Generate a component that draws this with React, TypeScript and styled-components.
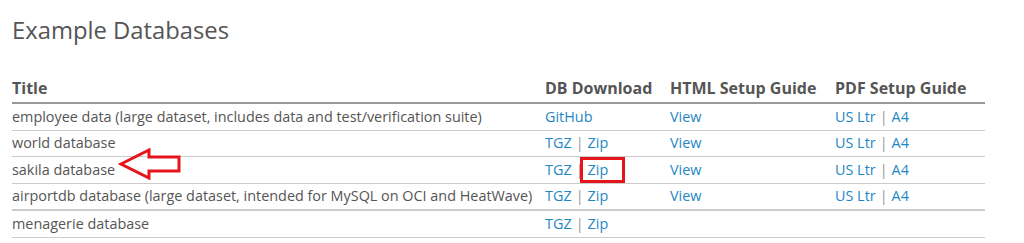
import React from 'react';
import styled, { createGlobalStyle } from 'styled-components';

const GlobalStyle = createGlobalStyle`
  html, body {
    margin: 0;
    padding: 0;
    background: #fff;
    font-family: 'Open Sans', 'Liberation Sans', sans-serif;
    color: #555;
  }
`;

const Page = styled.div`
  width: 1024px;
  height: 243px;
  overflow: hidden;
  padding: 15px 0 0 12px;
  box-sizing: border-box;
`;

const Heading = styled.h2`
  margin: 0 0 31px;
  font-size: 23.8px;
  font-weight: 400;
  line-height: 30px;
  color: #555;
`;

const Table = styled.table`
  width: 973px;
  border-collapse: collapse;
  table-layout: fixed;
`;

const HeadCell = styled.th`
  text-align: left;
  font-size: 16px;
  font-weight: 700;
  color: #555;
  padding: 0 0 3px;
  height: 23px;
  border-bottom: 2px solid #999;
`;

const Row = styled.tr<{ $thick?: boolean }>`
  border-bottom: ${(p) => (p.$thick ? '2px solid #ccc' : '1px solid #ccc')};
`;

const Cell = styled.td`
  font-size: 14.4px;
  line-height: 20px;
  height: 25.5px;
  padding: 0;
  white-space: nowrap;
  color: #555;
  vertical-align: middle;
`;

const TitleWrap = styled.span`
  position: relative;
`;

const Link = styled.a<{ $boxed?: boolean }>`
  color: #1f87c3;
  text-decoration: none;
  position: relative;

  ${(p) =>
    p.$boxed &&
    `
    &::after {
      content: '';
      position: absolute;
      left: -8px;
      right: -17px;
      top: -3px;
      bottom: -4px;
      border: 3px solid #e8141c;
    }
  `}
`;

const Sep = styled.span`
  color: #999;
  margin: 0 4px;
`;

const Arrow = styled.svg`
  position: absolute;
  left: calc(100% + 3px);
  top: -12px;
`;

type Links = { label: string; boxed?: boolean }[];

const rows: { title: string; dl: Links; html: boolean; pdf: boolean; thick?: boolean; arrow?: boolean }[] = [
  {
    title: 'employee data (large dataset, includes data and test/verification suite)',
    dl: [{ label: 'GitHub' }],
    html: true,
    pdf: true,
  },
  { title: 'world database', dl: [{ label: 'TGZ' }, { label: 'Zip' }], html: true, pdf: true },
  {
    title: 'sakila database',
    dl: [{ label: 'TGZ' }, { label: 'Zip', boxed: true }],
    html: true,
    pdf: true,
    arrow: true,
  },
  {
    title: 'airportdb database (large dataset, intended for MySQL on OCI and HeatWave)',
    dl: [{ label: 'TGZ' }, { label: 'Zip' }],
    html: true,
    pdf: true,
    thick: true,
  },
  { title: 'menagerie database', dl: [{ label: 'TGZ' }, { label: 'Zip' }], html: false, pdf: false },
];

const LinkList: React.FC<{ links: Links }> = ({ links }) => (
  <>
    {links.map((l, i) => (
      <React.Fragment key={l.label}>
        {i > 0 && <Sep>|</Sep>}
        <Link href="#" $boxed={l.boxed}>
          {l.label}
        </Link>
      </React.Fragment>
    ))}
  </>
);

const App: React.FC = () => {
  return (
    <Page>
      <GlobalStyle />
      <Heading>Example Databases</Heading>
      <Table>
        <colgroup>
          <col style={{ width: 533 }} />
          <col style={{ width: 125 }} />
          <col style={{ width: 165 }} />
          <col style={{ width: 150 }} />
        </colgroup>
        <thead>
          <tr>
            <HeadCell>Title</HeadCell>
            <HeadCell>DB Download</HeadCell>
            <HeadCell>HTML Setup Guide</HeadCell>
            <HeadCell>PDF Setup Guide</HeadCell>
          </tr>
        </thead>
        <tbody>
          {rows.map((r) => (
            <Row key={r.title} $thick={r.thick}>
              <Cell>
                <TitleWrap>
                  {r.title}
                  {r.arrow && (
                    <Arrow width="64" height="32" viewBox="0 0 64 32">
                      <path
                        d="M3 16 L31 2 L31 9 L61 9 L61 23 L31 23 L31 30 Z"
                        fill="none"
                        stroke="#e8141c"
                        strokeWidth="3"
                        strokeLinejoin="miter"
                      />
                    </Arrow>
                  )}
                </TitleWrap>
              </Cell>
              <Cell>
                <LinkList links={r.dl} />
              </Cell>
              <Cell>{r.html && <Link href="#">View</Link>}</Cell>
              <Cell>{r.pdf && <LinkList links={[{ label: 'US Ltr' }, { label: 'A4' }]} />}</Cell>
            </Row>
          ))}
        </tbody>
      </Table>
    </Page>
  );
};

export default App;
